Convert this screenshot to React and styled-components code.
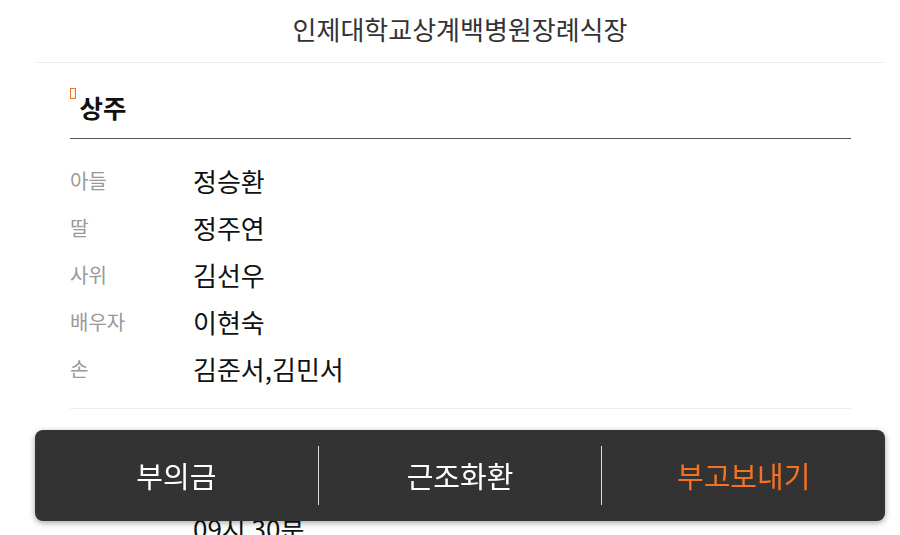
import React from 'react';
import styled, { createGlobalStyle } from 'styled-components';

const GlobalStyle = createGlobalStyle`
  html, body {
    margin: 0;
    padding: 0;
    background: #fff;
    font-family: "Noto Sans CJK KR", "Noto Sans", sans-serif;
    color: #111;
  }
`;

const Page = styled.div`
  margin: 0 15px 0 35px;
  padding-bottom: 120px;
`;

const Header = styled.header`
  height: 63px;
  padding-bottom: 6px;
  box-sizing: border-box;
  display: flex;
  align-items: center;
  justify-content: center;
  border-bottom: 1px solid #eeeeee;
`;

const Title = styled.h1`
  margin: 0;
  font-size: 26px;
  font-weight: 400;
  color: #333;
`;

const Section = styled.section`
  padding: 0 34px 0 35px;
`;

const Heading = styled.h2`
  margin: 29px 0 0;
  padding-bottom: 16px;
  font-size: 25.5px;
  line-height: 30px;
  font-weight: 700;
  color: #111;
  border-bottom: 1px solid #555;

  &::before {
    content: '';
    display: inline-block;
    vertical-align: top;
    width: 3.5px;
    height: 9px;
    margin: -4px 4px 0 0;
    border: 1.5px solid #f37321;
  }
`;

const List = styled.dl`
  margin: 0;
  padding: ${(p) => (p.$last ? '0' : '18px 0 16px')};
  border-bottom: ${(p) => (p.$last ? 'none' : '1px solid #eeeeee')};
`;

const Row = styled.div`
  display: flex;
  align-items: ${(p) => (p.$multi ? 'flex-start' : 'center')};
  min-height: 47px;
  padding: ${(p) => (p.$multi ? '6px 0' : '0')};
`;

const Label = styled.dt`
  width: 123px;
  flex-shrink: 0;
  font-size: 20px;
  color: #999;
  line-height: 28px;
`;

const Value = styled.dd`
  margin: 0;
  font-size: 26px;
  line-height: 30px;
  color: #111;
`;

const Bar = styled.nav`
  position: fixed;
  left: 35px;
  right: 15px;
  bottom: 14px;
  height: 91px;
  display: flex;
  align-items: center;
  background: #333333;
  border-radius: 8px;
  box-shadow: 0 2px 6px rgba(0, 0, 0, 0.35);
`;

const BarButton = styled.button`
  flex: 1;
  height: 100%;
  border: none;
  background: transparent;
  font-family: inherit;
  font-size: 29px;
  color: ${(p) => (p.$accent ? '#f37321' : '#ffffff')};
  cursor: pointer;
  padding: 0 0 2px;
`;

const Divider = styled.span`
  width: 1px;
  height: 59px;
  background: #dddddd;
`;

const mourners = [
  ['아들', '정승환'],
  ['딸', '정주연'],
  ['사위', '김선우'],
  ['배우자', '이현숙'],
  ['손', '김준서,김민서'],
];

export default function App() {
  return (
    <>
      <GlobalStyle />
      <Page>
        <Header>
          <Title>인제대학교상계백병원장례식장</Title>
        </Header>
        <Section>
          <Heading>상주</Heading>
          <List>
            {mourners.map(([label, name]) => (
              <Row key={label}>
                <Label>{label}</Label>
                <Value>{name}</Value>
              </Row>
            ))}
          </List>
          <List $last>
            <Row style={{ marginTop: 21 }}>
              <Label>빈소</Label>
              <Value>특실 3호</Value>
            </Row>
            <Row $multi>
              <Label>발인</Label>
              <Value>
                2024년 03월 15일
                <br />
                09시 30분
              </Value>
            </Row>
          </List>
        </Section>
      </Page>
      <Bar>
        <BarButton>부의금</BarButton>
        <Divider />
        <BarButton>근조화환</BarButton>
        <Divider />
        <BarButton $accent>부고보내기</BarButton>
      </Bar>
    </>
  );
}
